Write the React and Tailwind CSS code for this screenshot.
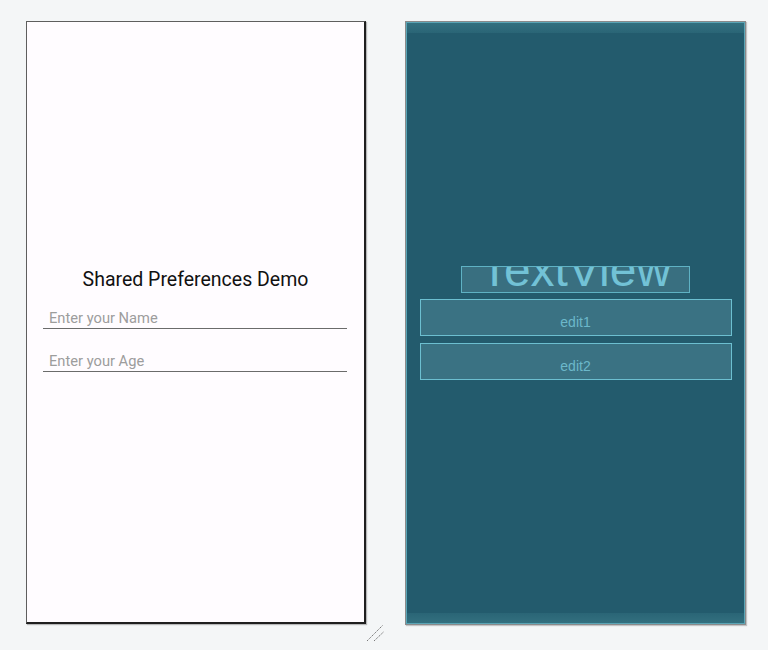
import React from "react";

export default function App() {
  return (
    <div className="relative w-[768px] h-[650px] bg-[#f4f6f7] flex items-start gap-[39px] pl-[26px] pt-[21px]">
      {/* Left: design preview */}
      <div className="w-[340px] h-[603px] shrink-0 bg-[#fffcff] border-t border-l border-[#5e5e5e] border-r-2 border-b-2 border-r-[#1f1f1f] border-b-[#1f1f1f] shadow-[1px_1px_1px_rgba(0,0,0,0.25)] flex flex-col pt-[246px]" style={{ fontFamily: "Roboto, 'Noto Sans', sans-serif" }}>
        <div className="text-[19.5px] leading-[24px] text-center text-[#111]">Shared Preferences Demo</div>
        <div className="ml-[16px] mr-[17px] mt-[16px] border-b border-[#6b6b6b]">
          <div className="text-[14.7px] leading-[20px] pl-[6px] text-[#9d9d9d]">Enter your Name</div>
        </div>
        <div className="ml-[16px] mr-[17px] mt-[22px] border-b border-[#6b6b6b]">
          <div className="text-[14.7px] leading-[20px] pl-[6px] text-[#9d9d9d]">Enter your Age</div>
        </div>
      </div>

      {/* Right: blueprint */}
      <div className="w-[341px] h-[604px] shrink-0 border border-[#8a8a8a] shadow-[1px_1px_1px_rgba(0,0,0,0.2)]">
        <div className="w-full h-full border border-[#5aa5b6] bg-[#235b6d] flex flex-col" style={{ fontFamily: "'Liberation Sans', Arial, sans-serif" }}>
          <div className="h-[10px] bg-gradient-to-b from-[#33707f] to-[#2a6576]"></div>
          <div className="flex-1 flex flex-col items-center pt-[233px]">
            <div className="w-[229px] h-[27px] overflow-hidden border border-[#5fb2c4] bg-[#396f80] flex justify-center">
              <div className="text-[48px] leading-[48px] mt-[-21px] text-[#72c2d6] whitespace-nowrap">TextView</div>
            </div>
            <div className="w-[312px] h-[37px] mt-[6px] border border-[#6cbfd0] bg-[#3a7283] flex justify-center pt-[14px]">
              <div className="text-[14px] leading-[16px] text-[#6cb8ca]">edit1</div>
            </div>
            <div className="w-[312px] h-[37px] mt-[7px] border border-[#6cbfd0] bg-[#3a7283] flex justify-center pt-[14px]">
              <div className="text-[14px] leading-[16px] text-[#6cb8ca]">edit2</div>
            </div>
          </div>
          <div className="h-[10px] bg-gradient-to-b from-[#2a6576] to-[#33707f]"></div>
        </div>
      </div>

      {/* resize handle */}
      <svg className="absolute left-[364px] top-[622px]" width="22" height="22" viewBox="0 0 22 22">
        <line x1="3" y1="19" x2="18.5" y2="3.5" stroke="#7a7a7a" strokeWidth="1" strokeDasharray="1.5 0.8" />
        <line x1="10" y1="19" x2="19.5" y2="10" stroke="#7a7a7a" strokeWidth="1" strokeDasharray="1.5 0.8" />
      </svg>
    </div>
  );
}
